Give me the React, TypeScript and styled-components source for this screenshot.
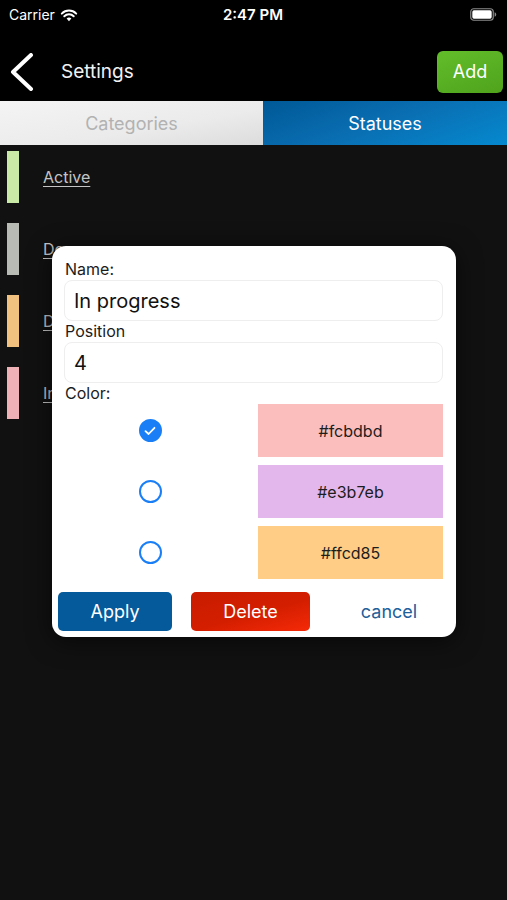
import React from "react";
import styled, { createGlobalStyle } from "styled-components";

const GlobalStyle = createGlobalStyle`
  html, body {
    margin: 0;
    padding: 0;
    background: #111111;
  }
  body {
    font-family: Inter, "Noto Sans", "Liberation Sans", sans-serif;
    -webkit-font-smoothing: antialiased;
  }
  * {
    box-sizing: border-box;
  }
`;

const Screen = styled.div`
  position: relative;
  min-height: 900px;
  display: flex;
  flex-direction: column;
  background: #111111;
`;

const StatusBar = styled.div`
  height: 29px;
  padding: 0 10px 0 9px;
  display: grid;
  grid-template-columns: 1fr auto 1fr;
  align-items: center;
  background: #000;
  color: #fff;
  font-size: 14px;
`;

const Carrier = styled.div`
  display: flex;
  align-items: center;
  gap: 5px;
`;

const Clock = styled.div`
  font-weight: 600;
  font-size: 15px;
`;

const BatteryWrap = styled.div`
  display: flex;
  justify-content: flex-end;
`;

const NavBar = styled.div`
  height: 72px;
  padding: 13px 4px 0 10px;
  display: flex;
  align-items: center;
  background: #000;
`;

const BackButton = styled.button`
  width: 28px;
  height: 40px;
  padding: 0;
  border: none;
  background: transparent;
  display: flex;
  align-items: center;
`;

const Title = styled.div`
  margin-left: 23px;
  flex: 1;
  color: #f2f2f2;
  font-size: 19px;
`;

const AddButton = styled.button`
  width: 66px;
  height: 42px;
  border: none;
  border-radius: 6px;
  background: linear-gradient(160deg, #62bd2a, #4fa31c);
  color: #fff;
  font-family: inherit;
  font-size: 18px;
`;

const Segments = styled.div`
  height: 44px;
  display: grid;
  grid-template-columns: 263px 1fr;
`;

const Segment = styled.div<{ $active?: boolean }>`
  display: flex;
  align-items: center;
  justify-content: center;
  font-size: 18px;
  color: ${(p) => (p.$active ? "#ffffff" : "#b2b2b2")};
  background: ${(p) =>
    p.$active
      ? "linear-gradient(160deg, #005896 0%, #0a6fb3 50%, #0589cf 100%)"
      : "linear-gradient(170deg, #f4f4f4 0%, #ebebeb 60%, #dcdcdc 100%)"};
`;

const List = styled.div`
  padding: 6px 0 0 7px;
  display: flex;
  flex-direction: column;
  gap: 20px;
`;

const StatusRow = styled.div`
  height: 52px;
  display: flex;
  align-items: center;
  gap: 24px;
`;

const ColorBar = styled.div<{ $color: string }>`
  width: 12px;
  height: 52px;
  background: ${(p) => p.$color};
`;

const StatusName = styled.span`
  color: #c4c4c4;
  font-size: 16px;
  text-decoration: underline;
  text-underline-offset: 3px;
`;

const Modal = styled.div`
  position: absolute;
  top: 246px;
  left: 52px;
  width: 404px;
  padding: 13px 13px 6px 12px;
  border-radius: 14px;
  background: #fff;
  box-shadow: 0 4px 24px rgba(0, 0, 0, 0.6);
`;

const Label = styled.div`
  height: 21px;
  padding-left: 1px;
  line-height: 21px;
  color: #1c1c1c;
  font-size: 16px;
`;

const Field = styled.div`
  height: 41px;
  padding: 0 9px;
  display: flex;
  align-items: center;
  border: 1px solid #eeeeee;
  border-radius: 8px;
  color: #111;
  font-size: 20px;
`;

const ColorGrid = styled.div`
  display: grid;
  grid-template-columns: 172px 185px;
  column-gap: 22px;
  row-gap: 8px;
  align-items: center;
`;

const RadioCell = styled.div`
  display: flex;
  justify-content: center;
`;

const Radio = styled.div<{ $checked?: boolean }>`
  width: 23px;
  height: 23px;
  border-radius: 50%;
  border: 2.5px solid #1a7ff7;
  background: ${(p) => (p.$checked ? "#1a7ff7" : "#fff")};
  display: flex;
  align-items: center;
  justify-content: center;
`;

const Swatch = styled.div<{ $color: string }>`
  height: 53px;
  display: flex;
  align-items: center;
  justify-content: center;
  background: ${(p) => p.$color};
  color: #1d1d1d;
  font-size: 16px;
`;

const Actions = styled.div`
  margin: 13px -7px 0 -6px;
  display: flex;
  align-items: center;
`;

const ActionButton = styled.button<{ $variant: "apply" | "delete" }>`
  height: 39px;
  width: ${(p) => (p.$variant === "apply" ? "114px" : "119px")};
  margin-left: ${(p) => (p.$variant === "apply" ? "0" : "19px")};
  border: none;
  border-radius: 5px;
  color: #fff;
  font-family: inherit;
  font-size: 18px;
  background: ${(p) =>
    p.$variant === "apply"
      ? "#045a9b"
      : "linear-gradient(165deg, #c81c00 0%, #d41e00 55%, #f52a08 100%)"};
`;

const CancelButton = styled.button`
  flex: 1;
  padding: 0 0 0 18px;
  border: none;
  background: transparent;
  color: #21609b;
  font-family: inherit;
  font-size: 18px;
`;

function WifiIcon() {
  return (
    <svg width="18" height="14" viewBox="0 0 18 14">
      <path d="M9 13.2 L6.6 10.6 A3.4 3.4 0 0 1 11.4 10.6 Z" fill="#fff" />
      <path d="M4.3 8.3 A6.7 6.7 0 0 1 13.7 8.3" stroke="#fff" strokeWidth="2" fill="none" strokeLinecap="round" />
      <path d="M1.8 5.6 A10.2 10.2 0 0 1 16.2 5.6" stroke="#fff" strokeWidth="2" fill="none" strokeLinecap="round" />
    </svg>
  );
}

function BatteryIcon() {
  return (
    <svg width="27" height="13" viewBox="0 0 27 13">
      <rect x="0.75" y="0.75" width="22.5" height="11.5" rx="3" fill="none" stroke="#8a8a8a" strokeWidth="1.2" />
      <rect x="2.3" y="2.3" width="19.4" height="8.4" rx="1.6" fill="#fff" />
      <path d="M24.6 4.3 Q26.2 4.6 26.2 6.5 Q26.2 8.4 24.6 8.7 Z" fill="#8a8a8a" />
    </svg>
  );
}

function BackChevron() {
  return (
    <svg width="24" height="38" viewBox="0 0 24 38">
      <path d="M21 2 L3 19 L21 36" stroke="#fff" strokeWidth="4" fill="none" strokeLinecap="round" strokeLinejoin="round" />
    </svg>
  );
}

function CheckMark() {
  return (
    <svg width="12" height="10" viewBox="0 0 12 10">
      <path d="M1.5 5.2 L4.6 8 L10.5 1.8" stroke="#fff" strokeWidth="1.8" fill="none" strokeLinecap="round" strokeLinejoin="round" />
    </svg>
  );
}

const statuses = [
  { name: "Active", color: "#c9eaa7" },
  { name: "Done", color: "#b8bbb4" },
  { name: "Delayed", color: "#f0c17f" },
  { name: "In progress", color: "#efb0b6" },
];

const palette = [
  { hex: "#fcbdbd", checked: true },
  { hex: "#e3b7eb", checked: false },
  { hex: "#ffcd85", checked: false },
];

export default function App() {
  return (
    <>
      <GlobalStyle />
      <Screen>
        <StatusBar>
          <Carrier>
            Carrier
            <WifiIcon />
          </Carrier>
          <Clock>2:47 PM</Clock>
          <BatteryWrap>
            <BatteryIcon />
          </BatteryWrap>
        </StatusBar>
        <NavBar>
          <BackButton>
            <BackChevron />
          </BackButton>
          <Title>Settings</Title>
          <AddButton>Add</AddButton>
        </NavBar>
        <Segments>
          <Segment>Categories</Segment>
          <Segment $active>Statuses</Segment>
        </Segments>
        <List>
          {statuses.map((s) => (
            <StatusRow key={s.name}>
              <ColorBar $color={s.color} />
              <StatusName>{s.name}</StatusName>
            </StatusRow>
          ))}
        </List>
        <Modal>
          <Label>Name:</Label>
          <Field>In progress</Field>
          <Label>Position</Label>
          <Field>4</Field>
          <Label>Color:</Label>
          <ColorGrid>
            {palette.map((c) => (
              <React.Fragment key={c.hex}>
                <RadioCell>
                  <Radio $checked={c.checked}>{c.checked && <CheckMark />}</Radio>
                </RadioCell>
                <Swatch $color={c.hex}>{c.hex}</Swatch>
              </React.Fragment>
            ))}
          </ColorGrid>
          <Actions>
            <ActionButton $variant="apply">Apply</ActionButton>
            <ActionButton $variant="delete">Delete</ActionButton>
            <CancelButton>cancel</CancelButton>
          </Actions>
        </Modal>
      </Screen>
    </>
  );
}
